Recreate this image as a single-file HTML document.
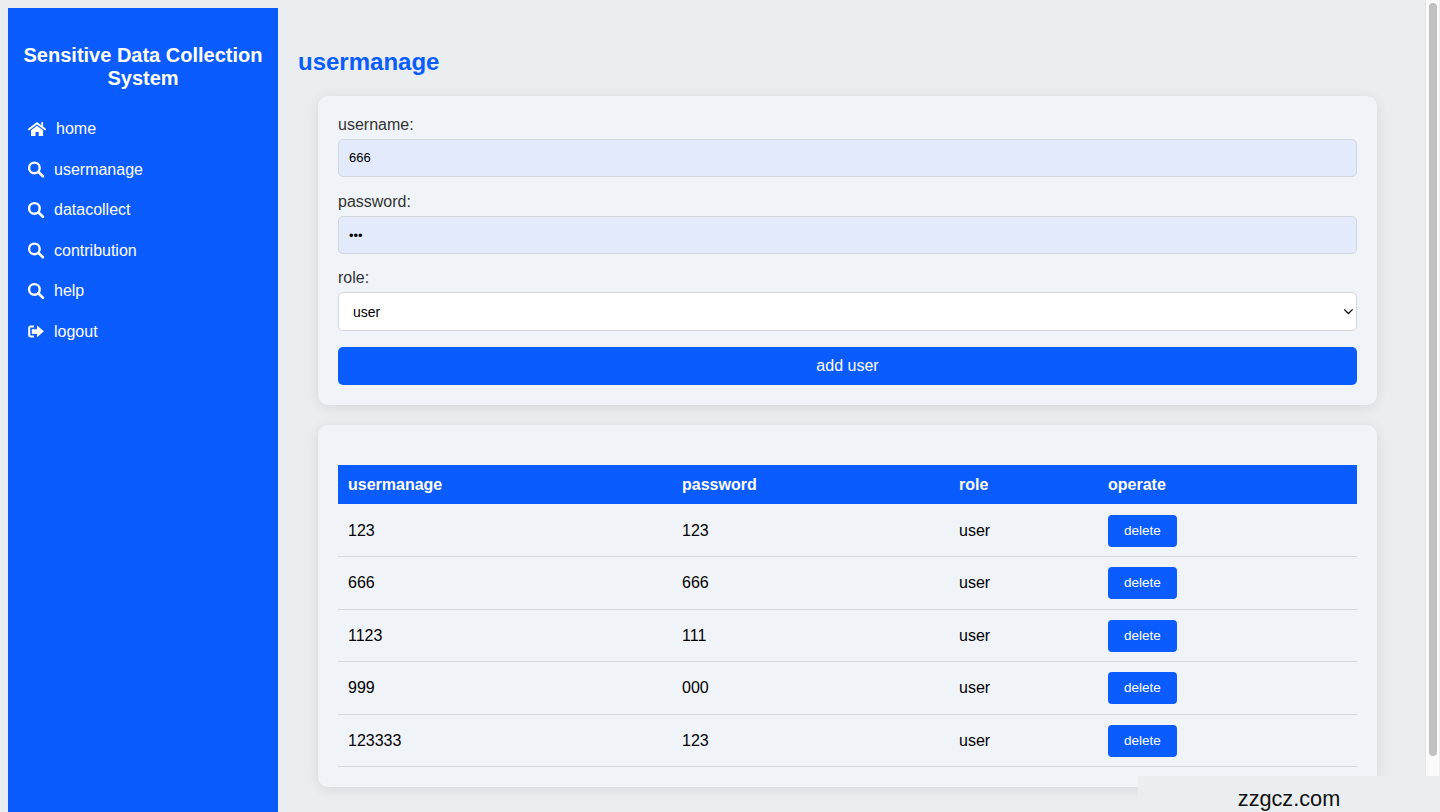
<!DOCTYPE html>
<html><head><meta charset="utf-8">
<style>
*{box-sizing:border-box;}
html,body{margin:0;padding:0;width:1440px;height:812px;overflow:hidden;}
body{background:#eaeef1;font-family:"Liberation Sans",sans-serif;position:relative;}
.sb{position:absolute;left:8px;top:8px;width:270px;height:820px;background:#0a5cff;color:#fff;}
.sb h2{position:absolute;left:0;top:36px;width:270px;margin:0;text-align:center;font-size:20px;line-height:23px;font-weight:bold;}
.nav{position:absolute;left:20px;font-size:16px;line-height:20px;height:20px;}
.nav svg{position:absolute;left:0;top:2px;}
.nav span{position:absolute;left:26px;top:0;white-space:nowrap;}
.icons{display:block;}
.h1{position:absolute;left:298px;top:47px;margin:0;font-size:24px;line-height:30px;font-weight:bold;color:#0a5cff;}
.card{position:absolute;left:318px;width:1059px;background:#f0f3f8;border-radius:10px;box-shadow:0 2px 14px rgba(0,0,0,0.09);}
.lbl{position:absolute;left:20px;font-size:16px;line-height:20px;color:#333;}
.inp{position:absolute;left:20px;width:1019px;height:38px;border:1px solid #d3d6db;border-radius:5px;background:#e3eafc;font-size:13px;line-height:36px;padding-left:10px;color:#000;}
.sel{background:#fff;padding-left:14px;font-size:14px;line-height:38px;}
.btn{position:absolute;left:20px;width:1019px;height:38px;border-radius:5px;background:#0a5cff;color:#fff;text-align:center;font-size:16px;line-height:38px;}
table{position:absolute;left:20px;top:40px;width:1019px;border-collapse:collapse;font-size:16px;}
th{background:#0a5cff;color:#fff;text-align:left;font-weight:bold;height:39px;padding:0 10px;}
td{height:52.5px;padding:1px 10px 0;border-bottom:1px solid #d5d8dc;color:#000;}
.del{display:inline-block;width:69px;height:32px;background:#0a5cff;color:#fff;border-radius:4px;font-size:13.5px;line-height:32px;text-align:center;vertical-align:middle;}
.scroll{position:absolute;left:1425px;top:0;width:15px;height:776px;background:#fafafa;border-left:1px solid #e6e6e6;border-right:1px solid #efefef;}
.thumb{position:absolute;left:3px;top:3px;width:8px;height:753px;border-radius:4px;background:#c1c1c1;}
.wm{position:absolute;left:1138px;top:776px;width:302px;height:36px;background:#eaeef1;border-radius:3px 0 0 0;font-size:21.7px;color:#111;text-align:center;line-height:46px;padding-left:0;}
</style></head>
<body>
<div class="sb">
  <h2>Sensitive Data Collection<br>System</h2>
  <div class="nav" style="top:111px"><span style="left:28px">home</span></div>
  <div class="nav" style="top:152px"><span>usermanage</span></div>
  <div class="nav" style="top:192px"><span>datacollect</span></div>
  <div class="nav" style="top:233px"><span>contribution</span></div>
  <div class="nav" style="top:273px"><span>help</span></div>
  <div class="nav" style="top:314px"><span>logout</span></div>
  <svg class="icons" width="270" height="360" viewBox="8 8 270 360" style="position:absolute;left:0;top:0;">
    <g fill="none" stroke="#fff">
      <circle cx="34.4" cy="167.9" r="5.3" stroke-width="2.4"/>
      <line x1="38.3" y1="171.8" x2="42.9" y2="176.3" stroke-width="2.6" stroke-linecap="round"/>
      <circle cx="34.4" cy="208.4" r="5.3" stroke-width="2.4"/>
      <line x1="38.3" y1="212.3" x2="42.9" y2="216.8" stroke-width="2.6" stroke-linecap="round"/>
      <circle cx="34.4" cy="248.9" r="5.3" stroke-width="2.4"/>
      <line x1="38.3" y1="252.8" x2="42.9" y2="257.3" stroke-width="2.6" stroke-linecap="round"/>
      <circle cx="34.4" cy="289.4" r="5.3" stroke-width="2.4"/>
      <line x1="38.3" y1="293.3" x2="42.9" y2="297.8" stroke-width="2.6" stroke-linecap="round"/>
      <polyline points="29,129.2 37,123.2 45,129.2" stroke-width="2" stroke-linecap="round" stroke-linejoin="miter"/>
      <path d="M33.9 326.4 H30.8 Q29.2 326.4 29.2 328 V334.8 Q29.2 336.4 30.8 336.4 H33.9" stroke-width="2"/>
    </g>
    <g fill="#fff">
      <rect x="41.3" y="122.1" width="1.8" height="5"/>
      <polygon points="31,130.2 37,125.8 43.1,130.2 43.1,135.9 38.7,135.9 38.7,132 35.5,132 35.5,135.9 31,135.9"/>
      <polygon points="31.8,329.3 37,329.3 37,325.4 44,331.3 37,337.2 37,334 31.8,334"/>
    </g>
  </svg>
</div>
<div class="h1">usermanage</div>
<div class="card" style="top:96px;height:309px;">
  <div class="lbl" style="top:19px">username:</div>
  <div class="inp" style="top:43px">666</div>
  <div class="lbl" style="top:96px">password:</div>
  <div class="inp" style="top:120px;height:37.5px;padding-top:1px;">&#8226;&#8226;&#8226;</div>
  <div class="lbl" style="top:172px">role:</div>
  <div class="inp sel" style="top:196px;height:39px;">user<svg width="12" height="8" viewBox="0 0 12 8" style="position:absolute;left:1004px;top:15px;"><polyline points="1.2,1.4 5.5,5.5 9.6,1.4" fill="none" stroke="#111" stroke-width="1.3"/></svg></div>
  <div class="btn" style="top:251px">add user</div>
</div>
<div class="card" style="top:425px;height:362px;">
  <table>
    <tr><th style="width:334px">usermanage</th><th style="width:277px">password</th><th style="width:149px">role</th><th>operate</th></tr>
    <tr><td>123</td><td>123</td><td>user</td><td><span class="del">delete</span></td></tr>
    <tr><td>666</td><td>666</td><td>user</td><td><span class="del">delete</span></td></tr>
    <tr><td>1123</td><td>111</td><td>user</td><td><span class="del">delete</span></td></tr>
    <tr><td>999</td><td>000</td><td>user</td><td><span class="del">delete</span></td></tr>
    <tr><td>123333</td><td>123</td><td>user</td><td><span class="del">delete</span></td></tr>
  </table>
</div>
<div class="scroll"><div class="thumb"></div></div>
<div class="wm">zzgcz.com</div>
</body></html>
